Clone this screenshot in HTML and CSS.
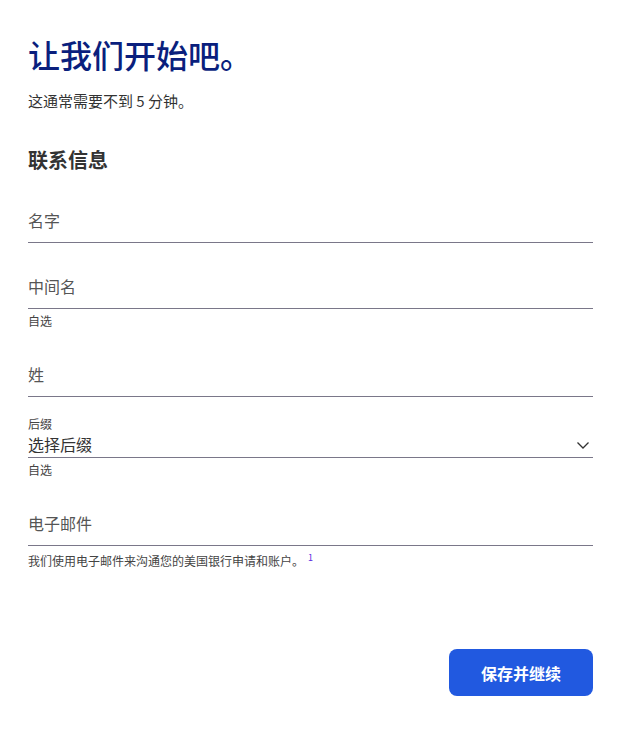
FILE: index.html
```html
<!DOCTYPE html>
<html lang="zh-CN">
<head>
    <meta charset="UTF-8">
    <meta name="viewport" content="width=device-width, initial-scale=1.0">
    <title>联系信息</title>
    <link rel="stylesheet" href="styles.css">
</head>
<body>
    <div class="container">
        <h1 class="title">让我们开始吧。</h1>
        <p class="subtitle">这通常需要不到 5 分钟。</p>

        <h2 class="section-title">联系信息</h2>

        <div class="field first">
            <div class="input-line">名字</div>
        </div>

        <div class="field">
            <div class="input-line">中间名</div>
            <div class="hint">自选</div>
        </div>

        <div class="field after-hint">
            <div class="input-line">姓</div>
        </div>

        <div class="field select-field">
            <div class="small-label">后缀</div>
            <div class="input-line select-line">
                <span>选择后缀</span>
                <svg class="chevron" width="14" height="14" viewBox="0 0 14 14">
                    <path d="M1.5 4.5 L7 10 L12.5 4.5" fill="none" stroke="#333" stroke-width="1.3"/>
                </svg>
            </div>
            <div class="hint">自选</div>
        </div>

        <div class="field after-hint">
            <div class="input-line">电子邮件</div>
            <div class="hint">我们使用电子邮件来沟通您的美国银行申请和账户。<sup class="note">1</sup></div>
        </div>

        <div class="actions">
            <button class="save-btn">保存并继续</button>
        </div>
    </div>
</body>
</html>
```

FILE: styles.css
```css
* {
    margin: 0;
    padding: 0;
    box-sizing: border-box;
}

body {
    font-family: "Noto Sans CJK SC", "Noto Sans", sans-serif;
    background: #fff;
    color: #333;
}

.container {
    width: 593px;
    padding: 32px 0 0 28px;
}

.title {
    font-size: 32px;
    font-weight: 500;
    line-height: 44px;
    color: #0a1f7d;
}

.subtitle {
    font-size: 15px;
    line-height: 20px;
    margin-top: 15px;
    color: #333;
}

.section-title {
    font-size: 20px;
    font-weight: 700;
    line-height: 26px;
    margin-top: 36px;
    color: #333;
}

.field {
    margin-top: 31px;
}

.field.first {
    margin-top: 35px;
}

.field.after-hint {
    margin-top: 33px;
}

.input-line {
    font-size: 16px;
    line-height: 24px;
    color: #555;
    padding-bottom: 10px;
    border-bottom: 1px solid #7a7789;
}

.hint {
    font-size: 12px;
    line-height: 16px;
    margin-top: 4px;
    color: #444;
}

.note {
    color: #5b2be0;
    font-size: 9px;
    margin-left: 4px;
}

.select-field {
    margin-top: 18px;
}

.small-label {
    font-size: 12px;
    line-height: 18px;
    color: #444;
}

.select-line {
    display: flex;
    justify-content: space-between;
    align-items: center;
    line-height: 23px;
    padding-bottom: 1px;
    color: #333;
}

.chevron {
    margin-right: 3px;
}

.actions {
    display: flex;
    justify-content: flex-end;
    margin-top: 80px;
}

.save-btn {
    width: 144px;
    height: 47px;
    background: #2159e0;
    color: #fff;
    border: none;
    border-radius: 8px;
    font-family: inherit;
    font-size: 16px;
    font-weight: 700;
    cursor: pointer;
}
```
